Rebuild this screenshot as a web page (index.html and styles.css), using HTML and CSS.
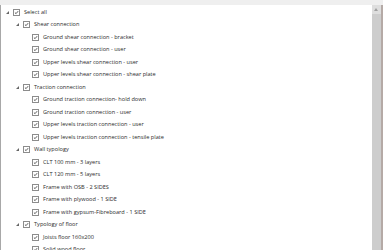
FILE: index.html
```html
<!DOCTYPE html>
<html lang="en">
<head>
  <meta charset="UTF-8" />
  <title>Filter tree</title>
  <link rel="stylesheet" href="styles.css">
</head>
<body>
  <div class="panel">
    <div class="topbar"></div>
    <div class="frame">
      <div class="tree">
        <div class="row lvl0"><span class="exp"></span><span class="cb"><svg viewBox="0 0 7 7"><path d="M1.3 3.6 L2.9 5.1 L5.8 1.6"/></svg></span><span class="label">Select all</span></div>

        <div class="row lvl1"><span class="exp"></span><span class="cb"><svg viewBox="0 0 7 7"><path d="M1.3 3.6 L2.9 5.1 L5.8 1.6"/></svg></span><span class="label">Shear connection</span></div>
        <div class="row lvl2"><span class="cb"><svg viewBox="0 0 7 7"><path d="M1.3 3.6 L2.9 5.1 L5.8 1.6"/></svg></span><span class="label">Ground shear connection - bracket</span></div>
        <div class="row lvl2"><span class="cb"><svg viewBox="0 0 7 7"><path d="M1.3 3.6 L2.9 5.1 L5.8 1.6"/></svg></span><span class="label">Ground shear connection - user</span></div>
        <div class="row lvl2"><span class="cb"><svg viewBox="0 0 7 7"><path d="M1.3 3.6 L2.9 5.1 L5.8 1.6"/></svg></span><span class="label">Upper levels shear connection - user</span></div>
        <div class="row lvl2"><span class="cb"><svg viewBox="0 0 7 7"><path d="M1.3 3.6 L2.9 5.1 L5.8 1.6"/></svg></span><span class="label">Upper levels shear connection - shear plate</span></div>

        <div class="row lvl1"><span class="exp"></span><span class="cb"><svg viewBox="0 0 7 7"><path d="M1.3 3.6 L2.9 5.1 L5.8 1.6"/></svg></span><span class="label">Traction connection</span></div>
        <div class="row lvl2"><span class="cb"><svg viewBox="0 0 7 7"><path d="M1.3 3.6 L2.9 5.1 L5.8 1.6"/></svg></span><span class="label">Ground traction connection- hold down</span></div>
        <div class="row lvl2"><span class="cb"><svg viewBox="0 0 7 7"><path d="M1.3 3.6 L2.9 5.1 L5.8 1.6"/></svg></span><span class="label">Ground traction connection - user</span></div>
        <div class="row lvl2"><span class="cb"><svg viewBox="0 0 7 7"><path d="M1.3 3.6 L2.9 5.1 L5.8 1.6"/></svg></span><span class="label">Upper levels traction connection - user</span></div>
        <div class="row lvl2"><span class="cb"><svg viewBox="0 0 7 7"><path d="M1.3 3.6 L2.9 5.1 L5.8 1.6"/></svg></span><span class="label">Upper levels traction connection - tensile plate</span></div>

        <div class="row lvl1"><span class="exp"></span><span class="cb"><svg viewBox="0 0 7 7"><path d="M1.3 3.6 L2.9 5.1 L5.8 1.6"/></svg></span><span class="label">Wall typology</span></div>
        <div class="row lvl2"><span class="cb"><svg viewBox="0 0 7 7"><path d="M1.3 3.6 L2.9 5.1 L5.8 1.6"/></svg></span><span class="label">CLT 100 mm - 3 layers</span></div>
        <div class="row lvl2"><span class="cb"><svg viewBox="0 0 7 7"><path d="M1.3 3.6 L2.9 5.1 L5.8 1.6"/></svg></span><span class="label">CLT 120 mm - 5 layers</span></div>
        <div class="row lvl2"><span class="cb"><svg viewBox="0 0 7 7"><path d="M1.3 3.6 L2.9 5.1 L5.8 1.6"/></svg></span><span class="label">Frame with OSB - 2 SIDES</span></div>
        <div class="row lvl2"><span class="cb"><svg viewBox="0 0 7 7"><path d="M1.3 3.6 L2.9 5.1 L5.8 1.6"/></svg></span><span class="label">Frame with plywood - 1 SIDE</span></div>
        <div class="row lvl2"><span class="cb"><svg viewBox="0 0 7 7"><path d="M1.3 3.6 L2.9 5.1 L5.8 1.6"/></svg></span><span class="label">Frame with gypsum-Fibreboard - 1 SIDE</span></div>

        <div class="row lvl1"><span class="exp"></span><span class="cb"><svg viewBox="0 0 7 7"><path d="M1.3 3.6 L2.9 5.1 L5.8 1.6"/></svg></span><span class="label">Typology of floor</span></div>
        <div class="row lvl2"><span class="cb"><svg viewBox="0 0 7 7"><path d="M1.3 3.6 L2.9 5.1 L5.8 1.6"/></svg></span><span class="label">Joists floor 160x200</span></div>
        <div class="row lvl2"><span class="cb"><svg viewBox="0 0 7 7"><path d="M1.3 3.6 L2.9 5.1 L5.8 1.6"/></svg></span><span class="label">Solid wood floor</span></div>
      </div>
      <div class="scrollbar">
        <div class="arrow"></div>
      </div>
    </div>
  </div>
</body>
</html>
```
FILE: styles.css
```css
* {
  box-sizing: border-box;
  margin: 0;
  padding: 0;
}

body {
  width: 383px;
  height: 250px;
  overflow: hidden;
  background: #ffffff;
  font-family: "Open Sans", sans-serif;
  color: #2b2b2b;
}

.panel {
  display: flex;
  flex-direction: column;
  height: 250px;
}

.topbar {
  height: 5px;
  flex: none;
  background: #efefef;
}

.frame {
  flex: 1;
  display: flex;
  border-left: 1px solid #a8a8a8;
  border-right: 2px solid #b5aaa6;
  overflow: hidden;
}

.tree {
  flex: 1;
  padding-top: 0.8px;
  overflow: hidden;
}

.row {
  height: 12.5px;
  display: flex;
  align-items: center;
  white-space: nowrap;
}

.lvl0 { padding-left: 5px; }
.lvl1 { padding-left: 15px; }
.lvl2 { padding-left: 31px; }

.exp {
  width: 0;
  height: 0;
  border-left: 3px solid transparent;
  border-bottom: 3px solid #666;
  margin-right: 4px;
}

.cb {
  width: 7px;
  height: 7px;
  border: 1px solid #8c8c8c;
  background: #fff;
  margin-right: 4px;
  flex: none;
  display: flex;
}

.cb svg {
  width: 5px;
  height: 5px;
  fill: none;
  stroke: #333;
  stroke-width: 1.1;
}

.label {
  font-size: 5.6px;
  line-height: 7px;
}

.scrollbar {
  width: 9px;
  flex: none;
  background: #cdcdcd;
  display: flex;
  flex-direction: column;
}

.arrow {
  height: 9px;
  background: #dedede;
  position: relative;
}

.arrow::after {
  content: "";
  position: absolute;
  left: 2px;
  top: 3px;
  width: 0;
  height: 0;
  border-left: 2.5px solid transparent;
  border-right: 2.5px solid transparent;
  border-bottom: 3px solid #a0a0a0;
}
```
